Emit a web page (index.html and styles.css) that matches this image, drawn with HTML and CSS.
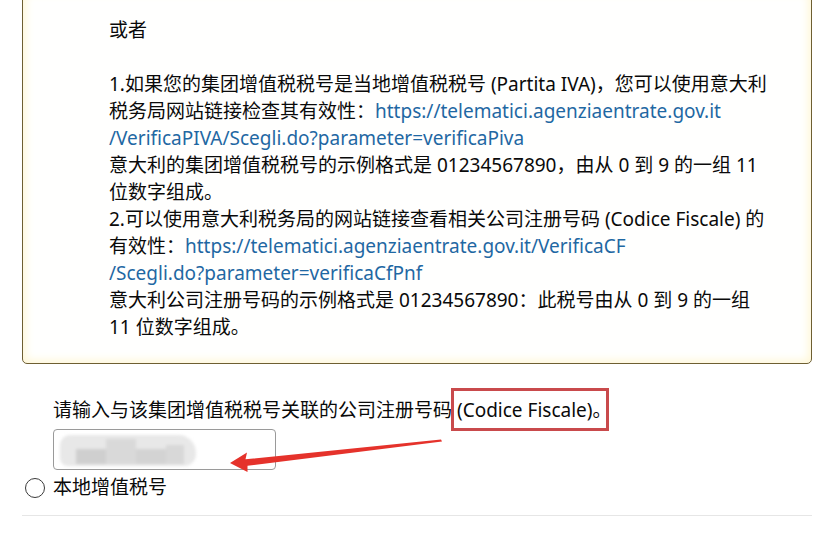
FILE: index.html
```html
<!DOCTYPE html>
<html lang="zh-CN">
<head>
<meta charset="utf-8">
<title>Codice Fiscale</title>
<link rel="stylesheet" href="styles.css">
</head>
<body>
<div class="page">
  <div class="callout">
    <p class="line">或者</p>
    <p class="line blank">&nbsp;</p>
    <p class="line">1.如果您的集团增值税税号是当地增值税税号 (Partita IVA)，您可以使用意大利<br>税务局网站链接检查其有效性：<a class="link" href="#">https://telematici.agenziaentrate.gov.it<br>/VerificaPIVA/Scegli.do?parameter=verificaPiva</a><br>意大利的集团增值税税号的示例格式是 01234567890，由从 0 到 9 的一组 11<br>位数字组成。</p>
    <p class="line">2.可以使用意大利税务局的网站链接查看相关公司注册号码 (Codice Fiscale) 的<br>有效性：<a class="link" href="#">https://telematici.agenziaentrate.gov.it/VerificaCF<br>/Scegli.do?parameter=verificaCfPnf</a><br>意大利公司注册号码的示例格式是 01234567890：此税号由从 0 到 9 的一组<br>11 位数字组成。</p>
  </div>

  <div class="form">
    <p class="label">请输入与该集团增值税税号关联的公司注册号码 <span class="mark">(Codice Fiscale)。</span></p>
    <div class="input">
      <div class="blur">
        <span class="blk b1"></span><span class="blk b2"></span><span class="blk b3"></span><span class="blk b4"></span>
      </div>
    </div>
    <label class="radio-row"><span class="radio"></span><span>本地增值税号</span></label>
  </div>
  <div class="rule"></div>

  <svg class="arrow" width="838" height="537" viewBox="0 0 838 537" aria-hidden="true">
    <polygon points="230,463 247,452.5 245.5,459.3 441,439.6 442,441.6 247.5,465.8 247.5,472" fill="#e5322b"/>
  </svg>
</div>
</body>
</html>
```

FILE: styles.css
```css
html, body {
  margin: 0;
  padding: 0;
  background: #ffffff;
}
body {
  font-family: "Noto Sans", "Noto Sans CJK SC", sans-serif;
  color: #0a0a0a;
  font-size: 19px;
  overflow: hidden;
}
.page {
  position: relative;
  width: 838px;
  height: 537px;
  overflow: hidden;
}
.callout {
  margin: -10px 0 0 22px;
  width: 790px;
  padding: 26px 0 22px 86px;
  box-sizing: border-box;
  border: 1.5px solid #6e5f32;
  border-radius: 0 0 5px 5px;
  background: #fffffe;
  box-shadow: inset 0 0 10px 2px #fff6d2;
}
.line {
  margin: 0;
  line-height: 27px;
  white-space: nowrap;
}
.link {
  color: #1f68a3;
  text-decoration: none;
}
.form {
  padding: 33px 0 0 53px;
}
.label {
  margin: 0;
  line-height: 27px;
  white-space: nowrap;
}
.mark {
  position: relative;
}
.mark::after {
  content: "";
  position: absolute;
  left: -6px;
  right: 2px;
  top: -9px;
  bottom: -8px;
  border: 3px solid #c94a4c;
}
.input {
  margin-top: 5px;
  width: 223px;
  height: 41px;
  box-sizing: border-box;
  border: 1px solid #9a9a9a;
  border-radius: 4px;
  position: relative;
  overflow: hidden;
}
.blur {
  position: absolute;
  left: 6px;
  top: 5px;
  width: 136px;
  height: 31px;
  border-radius: 10px 18px 12px 8px;
  background: #e8e8e8;
  filter: blur(1.5px);
}
.blk {
  position: absolute;
  background: #cfcfcf;
}
.b1 { left: 16px; top: 14px; width: 30px; height: 15px; }
.b2 { left: 46px; top: 4px; width: 30px; height: 25px; background: #d9d9d9; }
.b3 { left: 76px; top: 14px; width: 30px; height: 15px; background: #d3d3d3; }
.b4 { left: 106px; top: 10px; width: 18px; height: 19px; background: #d8d8d8; }
.radio-row {
  display: flex;
  align-items: center;
  margin: 4px 0 0 -28px;
  line-height: 27px;
}
.radio {
  width: 18px;
  height: 18px;
  border: 1.5px solid #3a3a3a;
  border-radius: 50%;
  margin-right: 8px;
  flex: none;
}
.rule {
  margin: 14px 26px 0 22px;
  height: 1px;
  background: #e6e6e6;
}
.arrow {
  position: absolute;
  left: 0;
  top: 0;
  pointer-events: none;
}
```
